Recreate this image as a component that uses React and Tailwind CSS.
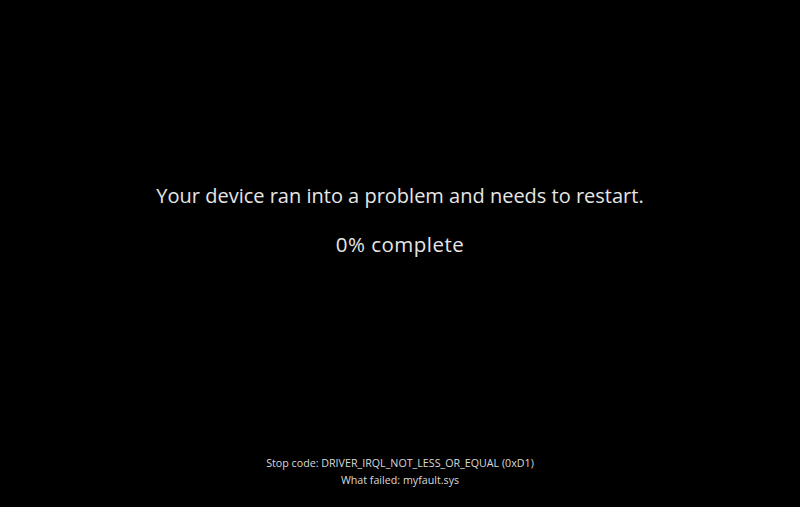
export default function App() {
  return (
    <div
      className="w-[800px] h-[507px] bg-black text-[#e6e6e6] flex flex-col items-center"
      style={{ fontFamily: '"Open Sans", "Noto Sans", sans-serif' }}
    >
      <div className="pt-[181px] flex flex-col items-center">
        <p className="text-[20px] leading-[30px]">Your device ran into a problem and needs to restart.</p>
        <p className="mt-[18px] text-[20.5px] leading-[30px] tracking-[0.5px]">0% complete</p>
      </div>
      <div className="mt-auto pb-[18px] flex flex-col items-center text-[10.7px] leading-[17px] text-[#d9d9d9]">
        <p>Stop code: DRIVER_IRQL_NOT_LESS_OR_EQUAL (0xD1)</p>
        <p>What failed: myfault.sys</p>
      </div>
    </div>
  );
}
